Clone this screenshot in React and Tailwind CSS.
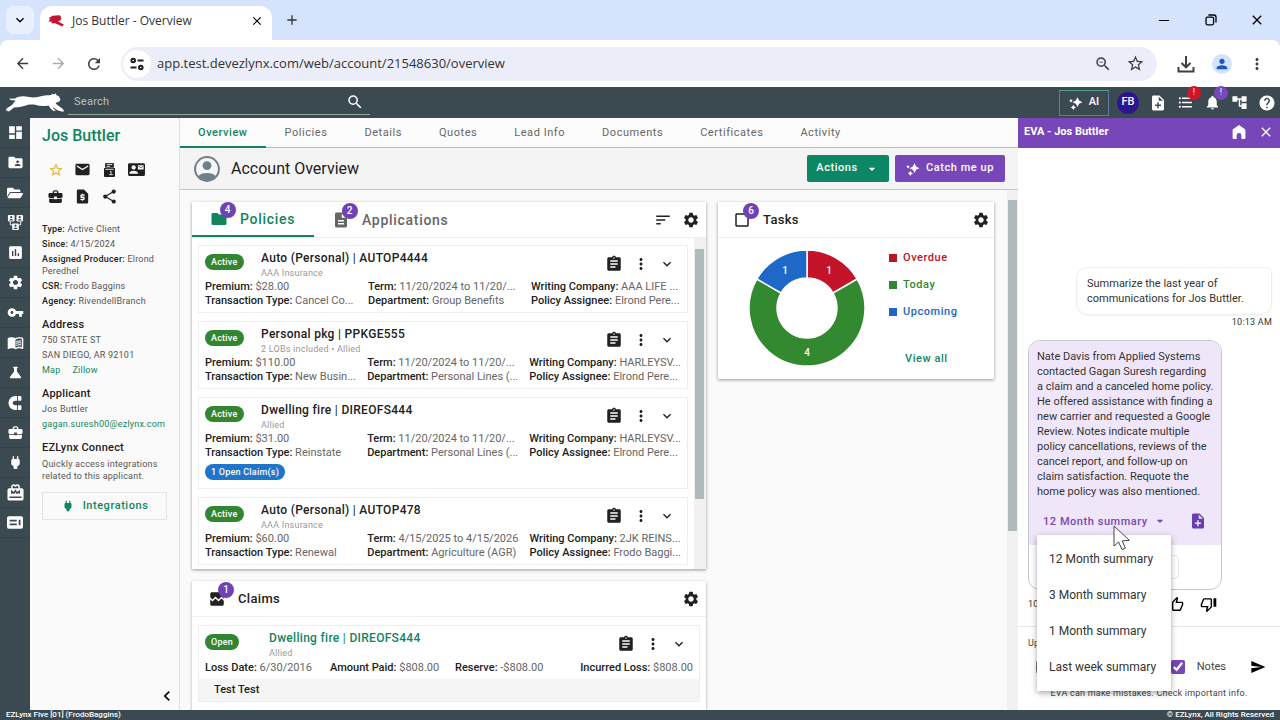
import { useState } from 'react';
import {
  MdAccountTree, MdAdd, MdArrowBack, MdArrowDropDown, MdArrowForward, MdAssessment, MdAssignment,
  MdBrokenImage, MdBusinessCenter, MdCheckBoxOutlineBlank, MdChevronLeft, MdClose,
  MdContactMail, MdDashboard, MdDescription, MdEmail, MdExpandMore, MdFolder,
  MdFolderShared, MdFormatListBulleted, MdHelp, MdMenuBook, MdMoreVert, MdNoteAdd, MdNotifications,
  MdOutlineStarBorder, MdOutlineThumbDown, MdOutlineThumbUp, MdPerson, MdPower, MdRefresh,
  MdRequestPage, MdScience, MdSearch, MdSend, MdSettings, MdShare, MdSort, MdVpnKey, MdZoomOut
} from 'react-icons/md';
import { FaFolderOpen, FaMagnet } from 'react-icons/fa';

const LynxLogo = () => (
  <svg viewBox="0 0 58 19" className="h-[19px] w-[58px]" fill="#fff">
    <path d="M0 17.5 L0.5 15.5 L6 12 L9.5 7.5 L4.5 7 L3 5.8 L9 5.6 C12 3 18 2.6 23 4 C28 5 32 4 36 3 C40 2 43 2.4 45 2 L46.5 0.8 L48 1.6 L49.5 0.2 L50.4 1.9 L53 3.4 L54.5 6.4 L53.4 8.6 L51 9.2 L49.5 10.6 L53 13.2 L57 16 L58 18.6 L55.5 18.6 L51.5 17.2 L47 14.2 L47.5 16 L50 17.6 L47.5 18 L44.5 15.6 L42.5 12.4 C38 13.4 34 13.2 30 12 C26 11.2 22 11.6 19 12.8 L14 14 L8 14.6 L3 18.4 Z" />
  </svg>
);

const LynxHead = () => (
  <svg viewBox="0 0 16 12" className="h-3 w-4" fill="#c41230">
    <path d="M1 3 L4.5 0.8 L12 0.2 L13.2 2.6 L12.6 5.4 L10 6 L12 7.6 L15.8 9.6 L14.4 11.4 L10 9.6 L7 8.2 L3 8.2 L4 6.8 L0.3 6.4 L2 4.8 Z" />
  </svg>
);

const Sparkle = ({ className }) => (
  <svg viewBox="0 0 24 24" className={className} fill="currentColor">
    <path d="M14.5 2 L17.3 7.7 L23 10.5 L17.3 13.3 L14.5 19 L11.7 13.3 L6 10.5 L11.7 7.7 Z" />
    <path d="M3.5 5 L4.8 6.7 L6.5 8 L4.8 9.3 L3.5 11 L2.2 9.3 L0.5 8 L2.2 6.7 Z" />
    <path d="M7.5 15 L9.2 17.8 L12 19.5 L9.2 21.2 L7.5 24 L5.8 21.2 L3 19.5 L5.8 17.8 Z" />
  </svg>
);

const TuneIcon = () => (
  <svg viewBox="0 0 14 14" className="size-3.5" fill="none" stroke="#202124" strokeWidth="2">
    <circle cx="3.2" cy="3.5" r="1.8" />
    <path d="M7.5 3.5h6M0.5 10.5h6" />
    <circle cx="10.8" cy="10.5" r="1.8" />
  </svg>
);

const DownloadIcon = () => (
  <svg viewBox="0 0 18 18" className="size-[18px]" fill="none" stroke="#3c4043" strokeWidth="2">
    <path d="M9 1v11M4.5 8L9 12.3L13.5 8M1.5 12v4.5h15V12" />
  </svg>
);

const TeamIcon = () => (
  <svg viewBox="0 0 18 18" className="size-[17px]">
    {[[1, 1], [10, 1], [5.5, 10]].map(([x, y]) => (
      <g key={`${x}-${y}`}>
        <rect x={x} y={y} width="7" height="7" rx="1" fill="#fff" />
        <circle cx={x + 3.5} cy={y + 2.4} r="1.2" fill="#3b4a50" />
        <path d={`M${x + 1.4} ${y + 6}a2.1 1.8 0 0 1 4.2 0z`} fill="#3b4a50" />
      </g>
    ))}
    <path d="M3.5 8v3.5h2M14.5 8v3.5h-2" stroke="#fff" fill="none" />
  </svg>
);

const GiftIcon = () => (
  <svg viewBox="0 0 18 18" className="size-[17px]">
    <path d="M5.2 5V3a1.9 1.9 0 0 1 3.8 0a1.9 1.9 0 0 1 3.8 0V5" fill="none" stroke="#fff" strokeWidth="1.6" />
    <rect x="0.5" y="4.5" width="17" height="13" rx="2" fill="#fff" />
    <path d="M5 10.4V7.6L7.4 9.6L9 7L10.6 9.6L13 7.6V10.4M2.5 14h13" fill="none" stroke="#3b4a50" strokeWidth="1.5" />
  </svg>
);

const NewsIcon = () => (
  <svg viewBox="0 0 18 14" className="h-[13px] w-4">
    <rect width="18" height="14" rx="2" fill="#fff" />
    <path d="M3 5h8M3 9h8M14.2 4v6.2" stroke="#3b4a50" strokeWidth="2" />
  </svg>
);

const DocStack = () => (
  <svg viewBox="0 0 12 15" className="h-3.5 w-[11px]">
    <path d="M1.2 0h9.6v5H1.2z" fill="#212121" />
    <path d="M3 1.7h6" stroke="#fff" />
    <path d="M3 3.6h3.5" stroke="#fff" strokeWidth="0.8" />
    <path d="M0 5.4h12V14a1 1 0 0 1-1 1H1a1 1 0 0 1-1-1z" fill="#212121" />
    <path d="M1.5 6.8h9M6.5 9h1.2v3.4M5.6 12.6h4" stroke="#fff" strokeWidth="0.9" fill="none" />
  </svg>
);

const HomeIcon = () => (
  <svg viewBox="0 0 14 14" className="size-3.5" fill="#fff">
    <path d="M7 0 L13.4 4.6 V13 A1 1 0 0 1 12.4 14 H9.4 V10.4 A2.4 2.4 0 0 0 4.6 10.4 V14 H1.6 A1 1 0 0 1 0.6 13 V4.6 Z" />
  </svg>
);

const AccountAvatar = () => (
  <svg viewBox="0 0 26 26" className="size-[26px]">
    <circle cx="13" cy="13" r="11.9" fill="#f4f6f7" stroke="#70808a" strokeWidth="2" />
    <circle cx="13" cy="9.6" r="4.4" fill="#70808a" />
    <path d="M4 20.4C7 15.8 19 15.8 22 20.4A11.8 11.8 0 0 1 4 20.4Z" fill="#70808a" />
  </svg>
);

const CursorIcon = () => (
  <svg viewBox="0 0 18 26" className="h-[26px] w-[18px]" fill="#fff" stroke="#444" strokeLinejoin="round">
    <path d="M1 1 V21 L5.6 17 L9 24.6 L12.4 23.2 L9.2 15.8 L16.4 15.4 Z" />
  </svg>
);

const navItems = [
  { label: 'Dashboard', icon: <MdDashboard /> },
  { label: 'Contacts', icon: <MdFolderShared /> },
  { label: 'Files', icon: <FaFolderOpen className="size-4" /> },
  { label: 'Teams', icon: <TeamIcon /> },
  { label: 'Reports', icon: <MdAssessment /> },
  { label: 'Settings', icon: <MdSettings /> },
  { label: 'Access', icon: <MdVpnKey /> },
  { label: 'Library', icon: <MdMenuBook /> },
  { label: 'Labs', icon: <MdScience /> },
  { label: 'Retention', icon: <FaMagnet className="size-3.5 rotate-90" /> },
  { label: 'Commercial', icon: <MdBusinessCenter /> },
  { label: 'Connect', icon: <MdPower /> },
  { label: 'Marketing', icon: <GiftIcon /> },
  { label: 'News', icon: <NewsIcon /> }
];

const tabs = ['Overview', 'Policies', 'Details', 'Quotes', 'Lead Info', 'Documents', 'Certificates', 'Activity'];

const policies = [
  {
    title: 'Auto (Personal)', number: 'AUTOP4444', carrier: 'AAA Insurance', premium: '$28.00',
    type: 'Cancel Co...', term: '11/20/2024 to 11/20/...', department: 'Group Benefits',
    company: 'AAA LIFE ...', assignee: 'Elrond Pere...'
  },
  {
    title: 'Personal pkg', number: 'PPKGE555', carrier: '2 LOBs included • Allied', premium: '$110.00',
    type: 'New Busin...', term: '11/20/2024 to 11/20/...', department: 'Personal Lines (...',
    company: 'HARLEYSV...', assignee: 'Elrond Pere...'
  },
  {
    title: 'Dwelling fire', number: 'DIREOFS444', carrier: 'Allied', premium: '$31.00',
    type: 'Reinstate', term: '11/20/2024 to 11/20/...', department: 'Personal Lines (...',
    company: 'HARLEYSV...', assignee: 'Elrond Pere...', claims: '1 Open Claim(s)'
  },
  {
    title: 'Auto (Personal)', number: 'AUTOP478', carrier: 'AAA Insurance', premium: '$60.00',
    type: 'Renewal', term: '4/15/2025 to 4/15/2026', department: 'Agriculture (AGR)',
    company: '2JK REINS...', assignee: 'Frodo Baggi...'
  }
];

const periods = ['12 Month summary', '3 Month summary', '1 Month summary', 'Last week summary'];

function Field({ label, children }) {
  return (
    <p className="whitespace-nowrap text-[#666]">
      <span className="font-medium text-[#222]">{label}:</span> {children}
    </p>
  );
}

function Badge({ children }) {
  return (
    <span className="absolute -top-2 left-2.5 flex size-4 items-center justify-center rounded-full bg-[#6f42b5] text-[10px] leading-4 font-medium text-white">
      {children}
    </span>
  );
}

function Pill({ children, color = 'bg-[#328632]' }) {
  return (
    <span className={`${color} inline-flex h-4 items-center rounded-full px-1.5 text-[9px] font-medium tracking-wide text-white`}>
      {children}
    </span>
  );
}

function RowActions() {
  return (
    <div className="flex h-7 items-center gap-[9px] pr-1.5 text-[#212121]">
      <button aria-label="Notes"><MdAssignment className="size-[18px]" /></button>
      <button aria-label="More"><MdMoreVert className="size-[18px]" /></button>
      <button aria-label="Expand"><MdExpandMore className="size-4" /></button>
    </div>
  );
}

function PolicyCard({ policy }) {
  return (
    <li className="border border-[#eee] px-1.5 pt-1 pb-1 text-[11px] leading-[14px]">
      <div className="flex h-[30px]">
        <div className="w-14 pt-1">
          <Pill>Active</Pill>
        </div>
        <div className="min-w-0 flex-1">
          <h3 className="truncate text-xs leading-4 font-medium tracking-wide text-[#212121]">
            {policy.title} <span className="font-normal">|</span> {policy.number}
          </h3>
          <p className="text-[9px] tracking-wide text-[#999]">{policy.carrier}</p>
        </div>
        <RowActions />
      </div>
      <div className="grid grid-cols-[152fr_152fr_149fr] gap-x-2.5">
        <Field label="Premium">{policy.premium}</Field>
        <Field label="Term">{policy.term}</Field>
        <Field label="Writing Company">{policy.company}</Field>
        <Field label="Transaction Type">{policy.type}</Field>
        <Field label="Department">{policy.department}</Field>
        <Field label="Policy Assignee">{policy.assignee}</Field>
      </div>
      {policy.claims && (
        <div className="pt-1 pb-1">
          <Pill color="bg-[#1f75c9]">{policy.claims}</Pill>
        </div>
      )}
    </li>
  );
}

function BrowserChrome() {
  return (
    <div className="bg-[#d6e3fc] font-['Open_Sans',sans-serif]">
      <div className="flex h-10 items-end">
        <button aria-label="Search tabs" className="mb-1.5 ml-1.5 flex size-7 items-center justify-center rounded-lg bg-[#e9f1fe]">
          <MdExpandMore className="size-4" />
        </button>
        <div className="ml-1.5 flex h-[34px] w-[232px] items-center rounded-t-xl bg-white pr-2 pb-1 pl-2">
          <LynxHead />
          <span className="ml-2 flex-1 text-xs text-[#333]">Jos Buttler - Overview</span>
          <button aria-label="Close tab"><MdClose className="size-3.5" /></button>
        </div>
        <button aria-label="New tab" className="mb-3 ml-3"><MdAdd className="size-4 text-[#333]" /></button>
        <div className="mr-[15px] mb-3 ml-auto flex items-center gap-8">
          <button aria-label="Minimize" className="flex size-3.5 items-center"><span className="h-px w-2.5 bg-black" /></button>
          <button aria-label="Restore">
            <svg viewBox="0 0 12 12" className="size-3" fill="none" stroke="#000" strokeWidth="1.3">
              <rect x="1" y="3.2" width="7.6" height="7.6" rx="1.5" />
              <path d="M3.4 1h5.4a2.2 2.2 0 0 1 2.2 2.2v5.2" />
            </svg>
          </button>
          <button aria-label="Close window"><MdClose className="size-4" /></button>
        </div>
      </div>
      <div className="flex h-[47px] items-center rounded-t-lg bg-white px-3.5 text-[#3c4043]">
        <button aria-label="Back"><MdArrowBack className="size-[17px]" /></button>
        <button aria-label="Forward" className="ml-[19px] text-[#aaa]"><MdArrowForward className="size-[17px]" /></button>
        <button aria-label="Reload" className="ml-[18px]"><MdRefresh className="size-[18px]" /></button>
        <div className="ml-[18px] flex h-[34px] flex-1 items-center rounded-full bg-[#ebeef9] pr-3 pl-0.5">
          <span className="flex size-7 items-center justify-center rounded-full bg-white"><TuneIcon /></span>
          <input
            aria-label="Address"
            defaultValue="app.test.devezlynx.com/web/account/21548630/overview"
            className="ml-1.5 min-w-0 flex-1 bg-transparent text-[13px] text-[#333] outline-none"
          />
          <button aria-label="Zoom"><MdZoomOut className="size-[18px]" /></button>
          <button aria-label="Bookmark" className="ml-3.5"><MdOutlineStarBorder className="size-[19px]" /></button>
        </div>
        <button aria-label="Downloads" className="ml-5"><DownloadIcon /></button>
        <button aria-label="Profile" className="ml-[17px] flex size-5 items-center justify-center rounded-full bg-[#d3e3fd] text-[#1a56c4]">
          <MdPerson className="size-4" />
        </button>
        <button aria-label="Menu" className="ml-4"><MdMoreVert className="size-[18px]" /></button>
      </div>
    </div>
  );
}

function AppBar() {
  return (
    <header className="flex h-[31px] shrink-0 items-center bg-[#3b4a50] pr-1 pl-1.5 text-white">
      <LynxLogo />
      <label className="ml-1 flex h-6 w-[302px] items-center border-b border-[#8fa5a3] px-1.5">
        <input aria-label="Search" placeholder="Search" className="min-w-0 flex-1 bg-transparent text-[11px] tracking-wide outline-none placeholder:text-[#b9c3c5]" />
        <MdSearch className="size-[18px]" />
      </label>
      <button className="ml-auto flex h-[26px] w-[50px] items-center justify-center gap-1.5 border border-[#66799a] border-t-[#4fa08c] text-[11px] font-medium">
        <Sparkle className="size-3.5" /> AI
      </button>
      <span className="ml-2 flex size-[22px] items-center justify-center rounded-full bg-[#2d1590] text-[11px] font-medium">FB</span>
      <div className="ml-2.5 flex items-center gap-2.5">
        <button aria-label="Add note"><MdNoteAdd className="size-[18px]" /></button>
        <button aria-label="Tasks" className="relative">
          <MdFormatListBulleted className="size-[17px]" />
          <span className="absolute -top-2 left-2.5 flex size-3.5 items-center justify-center rounded-full bg-[#d0142c] text-[9px]">!</span>
        </button>
        <button aria-label="Notifications" className="relative">
          <MdNotifications className="size-[17px]" />
          <span className="absolute -top-2 left-2.5 flex size-3.5 items-center justify-center rounded-full bg-[#7a46bd] text-[9px]">!</span>
        </button>
        <button aria-label="Hierarchy"><MdAccountTree className="size-[17px]" /></button>
        <button aria-label="Help"><MdHelp className="size-[18px]" /></button>
      </div>
    </header>
  );
}

function AccountPanel() {
  const actions = [
    { label: 'Favorite', icon: <MdOutlineStarBorder className="size-4 text-[#e5b02c]" /> },
    { label: 'Email', icon: <MdEmail className="size-[17px]" /> },
    { label: 'Documents', icon: <DocStack /> },
    { label: 'Contact card', icon: <MdContactMail className="size-[17px]" /> },
    { label: 'Commercial', icon: <MdBusinessCenter className="size-[17px]" /> },
    { label: 'Payments', icon: <MdRequestPage className="size-[17px]" /> },
    { label: 'Share', icon: <MdShare className="size-[17px]" /> }
  ];

  return (
    <aside className="flex w-[150px] shrink-0 flex-col border-r border-[#ddd] bg-[#fafafa] px-3 pt-2 text-[9px] leading-3 tracking-wide text-[#555]">
      <h1 className="text-base leading-5 font-medium tracking-normal text-[#12855f]">Jos Buttler</h1>
      <div className="mt-2.5 grid grid-cols-[repeat(4,27px)] text-[#212121]">
        {actions.map((a) => (
          <button key={a.label} aria-label={a.label} className="flex h-[27px] items-center justify-center">
            {a.icon}
          </button>
        ))}
      </div>
      <div className="mt-[13px] space-y-[3px]">
        {[
          ['Type', 'Active Client'],
          ['Since', '4/15/2024'],
          ['Assigned Producer', 'Elrond Peredhel'],
          ['CSR', 'Frodo Baggins'],
          ['Agency', 'RivendellBranch']
        ].map(([label, value]) => (
          <p key={label}><span className="font-medium text-[#222]">{label}:</span> {value}</p>
        ))}
      </div>
      <h2 className="mt-2.5 text-[11px] leading-4 font-medium text-[#212121]">Address</h2>
      <p className="leading-[15px]">750 STATE ST<br />SAN DIEGO, AR 92101</p>
      <p className="flex gap-3 leading-[15px] text-[#12855f]"><a href="#map">Map</a><a href="#zillow">Zillow</a></p>
      <h2 className="mt-2 text-[11px] leading-4 font-medium text-[#212121]">Applicant</h2>
      <p className="leading-[15px]">Jos Buttler</p>
      <a href="#email" className="leading-[15px] text-[#12855f]">gagan.suresh00@ezlynx.com</a>
      <h2 className="mt-2 mb-0.5 text-[11px] leading-4 font-medium text-[#212121]">EZLynx Connect</h2>
      <p>Quickly access integrations related to this applicant.</p>
      <button className="mt-2.5 flex h-7 items-center justify-center gap-2 border border-[#e4e4e4] text-[11px] font-medium tracking-wider text-[#12855f]">
        <MdPower className="size-3.5" /> Integrations
      </button>
      <button aria-label="Collapse" className="mt-auto mb-1 -mr-2.5 self-end text-black"><MdChevronLeft className="size-5" /></button>
    </aside>
  );
}

function PoliciesSection() {
  return (
    <section className="flex h-[367px] shrink-0 flex-col bg-white shadow-[0_1px_3px_rgba(0,0,0,0.4)]">
      <div className="flex h-9 shrink-0 border-b border-[#eee] text-sm font-medium tracking-wider">
        <button className="flex w-[122px] items-center gap-3 border-b-2 border-[#12855f] pl-[18px] text-[#12855f]">
          <span className="relative"><MdFolder className="size-[18px]" /><Badge>4</Badge></span>
          Policies
        </button>
        <button className="flex items-center gap-3 pl-[18px] text-[#666]">
          <span className="relative"><MdDescription className="size-[18px]" /><Badge>2</Badge></span>
          Applications
        </button>
        <div className="ml-auto flex items-center gap-2.5 pr-1.5 text-[#212121]">
          <button aria-label="Sort"><MdSort className="size-[18px]" /></button>
          <button aria-label="Policy settings"><MdSettings className="size-[18px]" /></button>
        </div>
      </div>
      <div className="flex min-h-0 flex-1">
        <ul className="flex min-w-0 flex-1 flex-col gap-2 overflow-hidden pt-[7px] pr-1.5 pl-1.5">
          {policies.map((p) => <PolicyCard key={p.number} policy={p} />)}
        </ul>
        <div className="flex w-3 flex-col bg-[#f1f1f1] pt-[11px] pr-0.5 pl-px">
          <div className="h-[250px] bg-[#b0babd]" />
        </div>
      </div>
    </section>
  );
}

function ClaimsSection() {
  return (
    <section className="h-40 shrink-0 bg-white shadow-[0_1px_3px_rgba(0,0,0,0.3)]">
      <div className="flex h-9 items-center gap-3 border-b border-[#eee] pr-1.5 pl-4 text-[#212121]">
        <span className="relative"><MdBrokenImage className="size-[18px]" /><Badge>1</Badge></span>
        <h2 className="text-[13px] font-medium tracking-wide">Claims</h2>
        <button aria-label="Claim settings" className="ml-auto"><MdSettings className="size-[18px]" /></button>
      </div>
      <div className="mx-1.5 mt-2 border border-[#eee] text-[11px] leading-[14px]">
        <div className="flex h-[35px] px-1.5 pt-1">
          <div className="w-16 pt-1"><Pill>Open</Pill></div>
          <div className="flex-1">
            <h3 className="text-xs leading-4 font-medium tracking-wide">
              <a href="#claim" className="text-[#12855f]">Dwelling fire <span className="font-normal">|</span> DIREOFS444</a>
            </h3>
            <p className="text-[9px] tracking-wide text-[#999]">Allied</p>
          </div>
          <RowActions />
        </div>
        <div className="flex h-[18px] items-start px-1.5">
          <div className="w-[125px]"><Field label="Loss Date">6/30/2016</Field></div>
          <div className="w-[125px]"><Field label="Amount Paid">$808.00</Field></div>
          <div className="flex-1"><Field label="Reserve">-$808.00</Field></div>
          <Field label="Incurred Loss">$808.00</Field>
        </div>
        <p className="bg-[#f5f5f5] px-[15px] py-1 font-medium text-[#222]">Test Test</p>
      </div>
    </section>
  );
}

function TasksSection() {
  const legend = [
    { label: 'Overdue', box: 'bg-[#b9142a]', text: 'text-[#b9142a]' },
    { label: 'Today', box: 'bg-[#328632]', text: 'text-[#328632]' },
    { label: 'Upcoming', box: 'bg-[#1e66bf]', text: 'text-[#1e66bf]' }
  ];

  return (
    <section className="h-[177px] w-[276px] shrink-0 bg-white shadow-[0_1px_3px_rgba(0,0,0,0.4)]">
      <div className="flex h-9 items-center gap-3 border-b border-[#eee] pr-1 pl-[15px] text-[#212121]">
        <span className="relative"><MdCheckBoxOutlineBlank className="size-[18px]" /><Badge>6</Badge></span>
        <h2 className="text-[13px] font-medium tracking-wide">Tasks</h2>
        <button aria-label="Task settings" className="ml-auto"><MdSettings className="size-[18px]" /></button>
      </div>
      <div className="flex pt-3 pl-[31px]">
        <svg viewBox="-58 -58 116 116" className="size-[116px]" stroke="#fff" strokeWidth="1.5">
          <path d="M0 -58A58 58 0 0 1 50.2 -29L26 -15A30 30 0 0 0 0 -30Z" fill="#c3142a" />
          <path d="M50.2 -29A58 58 0 1 1 -50.2 -29L-26 -15A30 30 0 1 0 26 -15Z" fill="#32892f" />
          <path d="M-50.2 -29A58 58 0 0 1 0 -58L0 -30A30 30 0 0 0 -26 -15Z" fill="#1e68c8" />
          <g fill="#fff" stroke="none" fontSize="10" fontWeight="500" textAnchor="middle">
            <text x="22" y="-34">1</text>
            <text x="-22" y="-34">1</text>
            <text x="0" y="48">4</text>
          </g>
        </svg>
        <div className="ml-6 flex flex-col text-[11px] font-medium tracking-wider">
          {legend.map((item) => (
            <a key={item.label} href="#tasks" className={`${item.text} flex h-[27px] items-start gap-1.5 leading-4`}>
              <span className={`${item.box} mt-1 size-2`} />
              {item.label}
            </a>
          ))}
          <a href="#all" className="mt-5 ml-4 leading-4 text-[#12855f]">View all</a>
        </div>
      </div>
    </section>
  );
}

function EvaPanel() {
  const [open, setOpen] = useState(true);
  const [period, setPeriod] = useState(periods[0]);

  const choose = (p) => {
    setPeriod(p);
    setOpen(false);
  };

  return (
    <aside className="flex w-[262px] shrink-0 flex-col bg-white">
      <div className="flex h-[30px] shrink-0 items-center bg-[#7746b8] pr-1.5 pb-0.5 pl-1.5 text-white">
        <h2 className="flex-1 text-[11px] font-bold">EVA - Jos Buttler</h2>
        <button aria-label="Home"><HomeIcon /></button>
        <button aria-label="Close" className="ml-3"><MdClose className="size-4" /></button>
      </div>
      <div className="flex flex-1 flex-col justify-end pr-2 pl-2.5 text-[11px] leading-[15px] text-[#333]">
        <p className="w-[196px] self-end rounded-xl rounded-tr-md border border-[#eee] px-2.5 py-2 shadow-xs">
          Summarize the last year of communications for Jos Buttler.
        </p>
        <time className="mb-2.5 self-end text-[9px] tracking-wide">10:13 AM</time>
        <div className="relative w-[194px] rounded-xl border border-[#c9c4d2]">
          <div className="rounded-t-xl bg-[#efe7f9] pt-2 pr-1.5 pb-2 pl-2">
            <p>
              Nate Davis from Applied Systems contacted Gagan Suresh regarding a&nbsp;claim and a canceled home policy.
              He offered assistance with finding a new carrier and requested a Google Review. Notes indicate multiple
              policy cancellations, reviews of the cancel report, and follow-up on claim satisfaction. Requote the
              home&nbsp;policy was also mentioned.
            </p>
            <div className="mt-1.5 flex h-8 items-center">
              <button
                aria-haspopup="menu"
                aria-expanded={open}
                onClick={() => setOpen(!open)}
                className="flex items-center gap-1 pl-1.5 font-medium tracking-wider text-[#7746b8]"
              >
                {period} <MdArrowDropDown className="size-4" />
              </button>
              <button aria-label="Add to notes" className="mr-2 ml-auto text-[#6a3cb0]"><MdNoteAdd className="size-[18px]" /></button>
            </div>
          </div>
          <div className="flex h-11 justify-end pt-2.5 pr-[42px]">
            <div className="h-6 w-24 rounded-sm border border-[#e8e8e8]" />
          </div>
          {open && (
            <ul role="menu" className="absolute top-[194px] left-2 z-10 w-[134px] bg-white py-1.5 text-xs shadow-[0_2px_6px_rgba(0,0,0,0.35)]">
              {periods.map((p) => (
                <li key={p} role="none">
                  <button role="menuitem" onClick={() => choose(p)} className="h-9 w-full px-3 text-left whitespace-nowrap">{p}</button>
                </li>
              ))}
            </ul>
          )}
          <span className="pointer-events-none absolute top-[184px] left-[84px] z-20"><CursorIcon /></span>
        </div>
        <div className="mb-3 flex h-6 items-center pt-1">
          <time className="text-[9px] tracking-wide">10:13 AM</time>
          <button aria-label="Good response" className="ml-auto"><MdOutlineThumbUp className="size-[17px] text-black" /></button>
          <button aria-label="Bad response" className="mr-[55px] ml-4"><MdOutlineThumbDown className="size-[17px] text-black" /></button>
        </div>
      </div>
      <form className="h-[84px] shrink-0 border-t border-[#e8e8e8] px-2.5 pt-2.5 text-[#444]" onSubmit={(e) => e.preventDefault()}>
        <p className="text-[9px] leading-3 tracking-wide">Update my summary</p>
        <div className="mt-2 flex h-5 items-center text-[11px]">
          <label className="flex items-center gap-2 pl-2">
            <input type="checkbox" className="size-3.5" /> Texts
          </label>
          <label className="ml-auto flex items-center gap-3">
            <input type="checkbox" defaultChecked className="size-3.5 accent-[#7746b8]" /> Notes
          </label>
          <button aria-label="Send" className="mr-1 ml-6 text-black"><MdSend className="size-4" /></button>
        </div>
        <p className="mt-2 text-center text-[9px] leading-4 tracking-wide">EVA can make mistakes. Check important info.</p>
      </form>
    </aside>
  );
}

export default function App() {
  const [tab, setTab] = useState('Overview');

  return (
    <div className="flex h-screen flex-col overflow-hidden bg-[#fafafa] font-[Roboto,sans-serif]">
      <BrowserChrome />
      <AppBar />
      <div className="flex min-h-0 flex-1">
        <nav className="flex w-[30px] shrink-0 flex-col bg-[#3b4a50] text-[17px] text-white">
          {navItems.map((item) => (
            <a key={item.label} href="#nav" aria-label={item.label} className="flex h-[30px] items-center justify-center border-b border-[#35434a]">
              {item.icon}
            </a>
          ))}
        </nav>
        <AccountPanel />
        <main className="flex min-w-0 flex-1 flex-col">
          <div className="flex h-[30px] shrink-0 gap-px border-b border-[#bbb] bg-[#fcfcfc] text-[11px] tracking-wider text-[#666]">
            {tabs.map((t) => (
              <button
                key={t}
                onClick={() => setTab(t)}
                className={t === tab ? '-mb-px border-b-2 border-[#12855f] px-[18px] pt-0.5 font-medium text-[#12855f]' : 'px-[18px] pt-0.5'}
              >
                {t}
              </button>
            ))}
          </div>
          <div className="flex h-[42px] shrink-0 items-center border-b border-[#c6c6c6] bg-[#f4f4f4] pr-[13px] pl-3.5">
            <AccountAvatar />
            <h2 className="ml-[11px] flex-1 text-base text-[#212121]">Account Overview</h2>
            <button className="flex h-[27px] w-[82px] items-center justify-center gap-1.5 rounded-xs bg-[#0b8765] text-[11px] font-medium tracking-wider text-white">
              Actions <MdArrowDropDown className="size-4" />
            </button>
            <button className="ml-1.5 flex h-[27px] w-[110px] items-center justify-center gap-1.5 rounded-xs bg-[#7746b8] text-[11px] font-medium tracking-wider text-white">
              <Sparkle className="size-3.5" /> Catch me up
            </button>
          </div>
          <div className="flex min-h-0 flex-1 overflow-hidden">
            <div className="flex min-w-0 flex-1 gap-3 pt-3 pr-[13px] pl-3">
              <div className="flex min-w-0 flex-1 flex-col gap-3">
                <PoliciesSection />
                <ClaimsSection />
              </div>
              <TasksSection />
            </div>
            <div className="w-[11px] bg-[#f1f1f1] px-px pt-2.5">
              <div className="h-[331px] bg-[#b0babd]" />
            </div>
          </div>
        </main>
        <EvaPanel />
      </div>
      <footer className="flex h-2.5 shrink-0 items-center justify-between bg-[#3b4a50] px-1.5 text-[8px] font-medium text-white">
        <span>EZLynx Five [01] (FrodoBaggins)</span>
        <span>© EZLynx, All Rights Reserved</span>
      </footer>
    </div>
  );
}
